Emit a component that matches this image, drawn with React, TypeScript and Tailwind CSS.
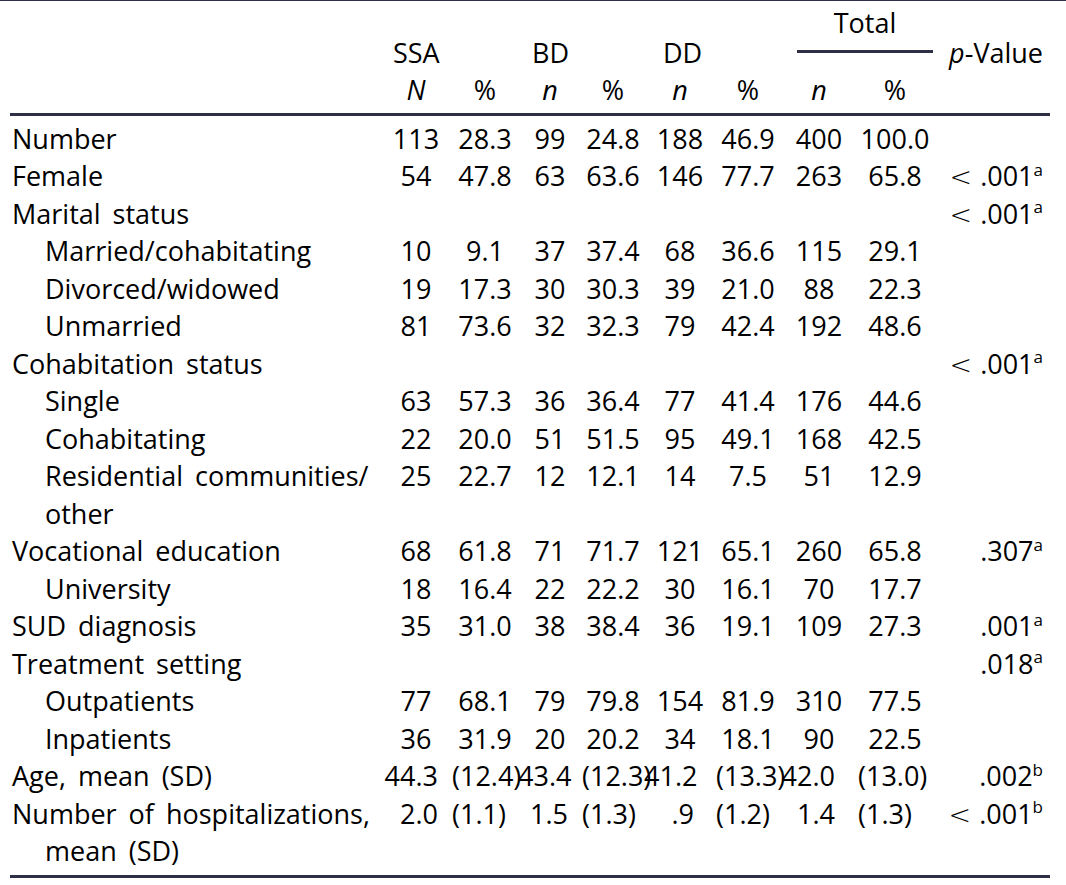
import React from "react";

type Row = {
  label: string;
  sub?: boolean;
  v?: string[];
  mean?: string[];
  p?: string;
  lt?: boolean;
  s?: string;
};

const rows: Row[] = [
  { label: "Number", v: ["113", "28.3", "99", "24.8", "188", "46.9", "400", "100.0"] },
  { label: "Female", v: ["54", "47.8", "63", "63.6", "146", "77.7", "263", "65.8"], lt: true, p: ".001", s: "a" },
  { label: "Marital status", lt: true, p: ".001", s: "a" },
  { label: "Married/cohabitating", sub: true, v: ["10", "9.1", "37", "37.4", "68", "36.6", "115", "29.1"] },
  { label: "Divorced/widowed", sub: true, v: ["19", "17.3", "30", "30.3", "39", "21.0", "88", "22.3"] },
  { label: "Unmarried", sub: true, v: ["81", "73.6", "32", "32.3", "79", "42.4", "192", "48.6"] },
  { label: "Cohabitation status", lt: true, p: ".001", s: "a" },
  { label: "Single", sub: true, v: ["63", "57.3", "36", "36.4", "77", "41.4", "176", "44.6"] },
  { label: "Cohabitating", sub: true, v: ["22", "20.0", "51", "51.5", "95", "49.1", "168", "42.5"] },
  { label: "Residential communities/ other", sub: true, v: ["25", "22.7", "12", "12.1", "14", "7.5", "51", "12.9"] },
  { label: "Vocational education", v: ["68", "61.8", "71", "71.7", "121", "65.1", "260", "65.8"], p: ".307", s: "a" },
  { label: "University", sub: true, v: ["18", "16.4", "22", "22.2", "30", "16.1", "70", "17.7"] },
  { label: "SUD diagnosis", v: ["35", "31.0", "38", "38.4", "36", "19.1", "109", "27.3"], p: ".001", s: "a" },
  { label: "Treatment setting", p: ".018", s: "a" },
  { label: "Outpatients", sub: true, v: ["77", "68.1", "79", "79.8", "154", "81.9", "310", "77.5"] },
  { label: "Inpatients", sub: true, v: ["36", "31.9", "20", "20.2", "34", "18.1", "90", "22.5"] },
  { label: "Age, mean (SD)", mean: ["44.3", "(12.4)", "43.4", "(12.3)", "41.2", "(13.3)", "42.0", "(13.0)"], p: ".002", s: "b" },
  { label: "Number of hospitalizations, mean (SD)", mean: ["2.0", "(1.1)", "1.5", "(1.3)", ".9", "(1.2)", "1.4", "(1.3)"], lt: true, p: ".001", s: "b" },
];

// right padding of the mean cells, per group
const meanPad = ["pr-[14px]", "pr-[14px]", "pr-[22px]", "pr-[23px]"];

const Cols = () => (
  <colgroup>
    <col className="w-[370px]" />
    <col className="w-[72px]" />
    <col className="w-[66px]" />
    <col className="w-[64px]" />
    <col className="w-[62px]" />
    <col className="w-[72px]" />
    <col className="w-[64px]" />
    <col className="w-[78px]" />
    <col className="w-[74px]" />
    <col className="w-[111px]" />
  </colgroup>
);

export default function App() {
  return (
    <div
      className="w-[1066px] h-[885px] bg-white text-black text-[27px]"
      style={{ fontFamily: '"Open Sans", "Noto Sans", sans-serif' }}
    >
      <div className="h-px bg-[#2e3048]" />
      <div className="pl-[10px]">
        <table className="table-fixed border-separate border-spacing-0 w-[1033px] leading-[30px]">
          <Cols />
          <tbody>
            <tr>
              <td rowSpan={3} className="p-0" />
              <td colSpan={2} rowSpan={2} className="p-0 pl-[13px] align-bottom text-left">SSA</td>
              <td colSpan={2} rowSpan={2} className="p-0 pl-[14px] align-bottom text-left">BD</td>
              <td colSpan={2} rowSpan={2} className="p-0 pl-[19px] align-bottom text-left">DD</td>
              <td colSpan={2} className="p-0 pt-[7px]">
                <div className="ml-[17px] mr-[-1px] border-b-[3px] border-[#2e3048] pb-[11.5px] text-center">
                  Total
                </div>
              </td>
              <td rowSpan={2} className="p-0 align-bottom text-right">
                <span className="italic">p</span>-Value
              </td>
            </tr>
            <tr>
              <td colSpan={2} className="p-0 h-[15px]" />
            </tr>
            <tr>
              {["N", "%", "n", "%", "n", "%", "n", "%"].map((h, i) => (
                <td key={i} className={`p-0 pt-[7px] pb-[8px] text-center ${h === "%" ? "" : "italic"}`}>
                  {h}
                </td>
              ))}
              <td className="p-0" />
            </tr>
          </tbody>
        </table>
        <div className="h-[3px] w-[1040px] bg-[#2e3048]" />
        <table className="table-fixed border-separate border-spacing-0 w-[1033px] leading-[37.5px] mt-[4px]">
          <Cols />
          <tbody>
            {rows.map((r, i) => (
              <tr key={i}>
                <td
                  className={`p-0 align-top [word-spacing:5px] ${
                    r.sub ? "pl-[35px] -indent-[3px]" : "pl-[35px] -indent-[33px]"
                  }`}
                >
                  {r.sub ? <span className="pl-[3px]">{r.label}</span> : r.label}
                </td>
                {r.v
                  ? r.v.map((x, j) => (
                      <td key={j} className="p-0 align-top text-center">
                        {x}
                      </td>
                    ))
                  : r.mean
                  ? r.mean.map((x, j) => (
                      <td
                        key={j}
                        className={`p-0 align-top whitespace-nowrap ${
                          j % 2 === 0 ? `text-right ${meanPad[j / 2]}` : "text-left"
                        }`}
                      >
                        {x}
                      </td>
                    ))
                  : Array.from({ length: 8 }).map((_, j) => <td key={j} className="p-0" />)}
                <td className="p-0 align-top text-right whitespace-nowrap h-[37.5px]">
                  {r.lt && (
                    <span
                      className="mr-[8px] font-light leading-[0px]"
                      style={{ fontFamily: '"DejaVu Sans", sans-serif' }}
                    >
                      &lt;
                    </span>
                  )}
                  {r.p}
                  {r.s && <sup className="text-[17px] leading-[0px] top-[-0.6em]">{r.s}</sup>}
                </td>
              </tr>
            ))}
          </tbody>
        </table>
        <div className="mt-[5px] h-[3px] w-[1040px] bg-[#2e3048]" />
      </div>
    </div>
  );
}
